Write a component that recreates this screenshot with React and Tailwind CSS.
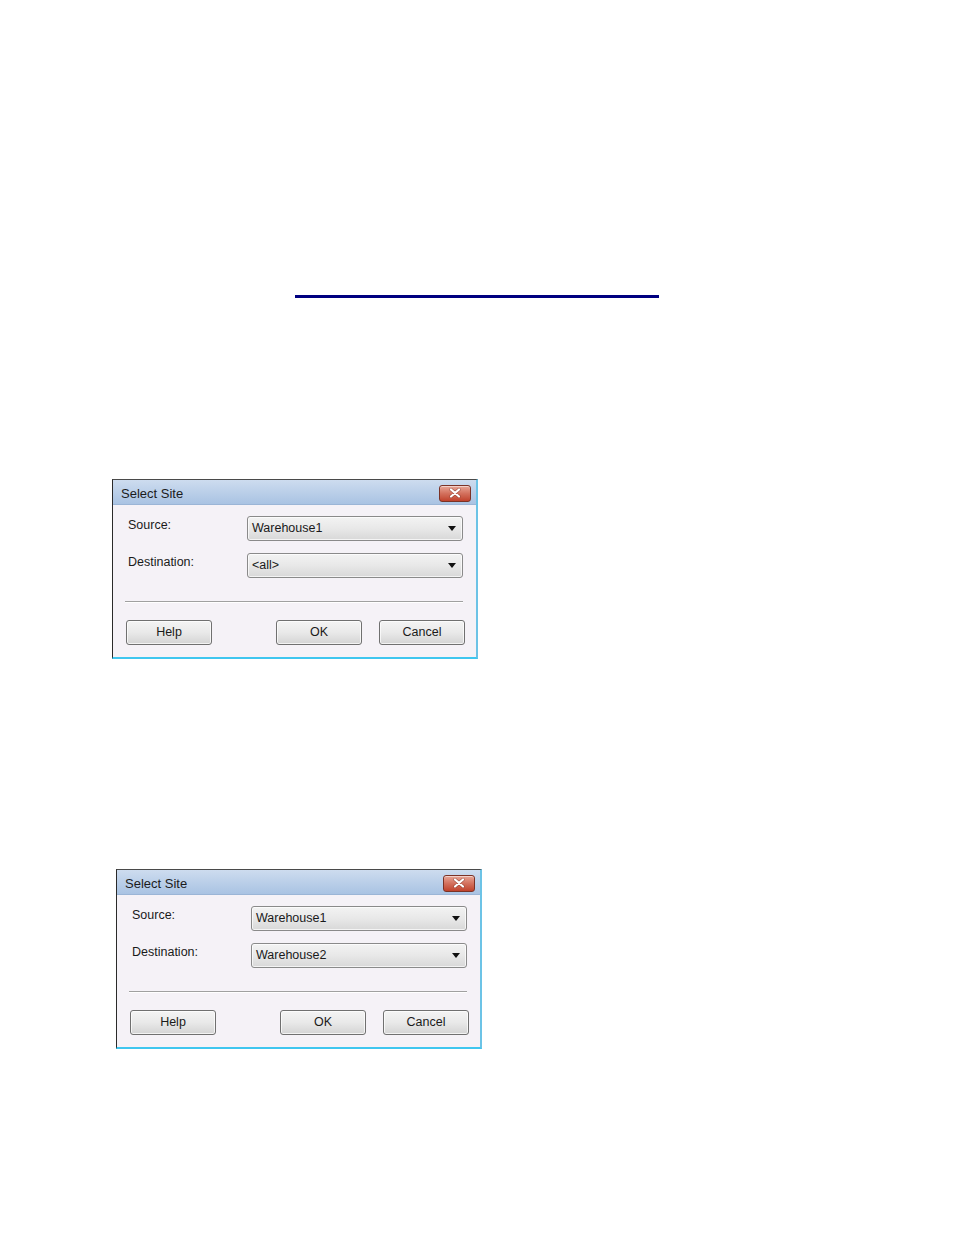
const font = { fontFamily: '"Liberation Sans", Arial, sans-serif' };

function CloseButton() {
  return (
    <div className="w-[32px] h-[17px] mt-[2px] rounded-[3px] border border-[#7b3226] bg-gradient-to-b from-[#e8a596] via-[#d3705d] to-[#c0412b] flex items-center justify-center shadow-[inset_0_1px_0_rgba(255,255,255,0.5)]">
      <svg width="14" height="10" viewBox="0 0 14 10">
        <path d="M3 1.5 L11 8.5 M11 1.5 L3 8.5" stroke="#6b2a20" strokeWidth="3.4" strokeLinecap="round" opacity="0.5" />
        <path d="M3 1.5 L11 8.5 M11 1.5 L3 8.5" stroke="#ffffff" strokeWidth="2.2" strokeLinecap="round" />
      </svg>
    </div>
  );
}

function Combo({ value }) {
  return (
    <div className="w-[216px] h-[25px] shrink-0 rounded-[3px] border border-[#8a8a8a] bg-gradient-to-b from-[#f3f3f3] via-[#e8e8e8] to-[#d8d8d8] flex items-center pl-[4px] pr-[6px] shadow-[inset_0_0_0_1px_rgba(255,255,255,0.7)]">
      <span className="flex-1 text-[12.5px] text-[#1a1a1a] leading-none">{value}</span>
      <svg width="8" height="5" viewBox="0 0 8 5">
        <path d="M0 0 H8 L4 5 Z" fill="#111" />
      </svg>
    </div>
  );
}

function Button({ children }) {
  return (
    <div className="w-[86px] h-[25px] shrink-0 rounded-[3px] border border-[#707070] bg-gradient-to-b from-[#f4f4f4] via-[#e9e9e9] to-[#d4d4d4] flex items-center justify-center text-[12.5px] text-[#1a1a1a] shadow-[inset_0_0_0_1px_rgba(255,255,255,0.7)]">
      {children}
    </div>
  );
}

function SelectSiteDialog({ destination }) {
  return (
    <div
      className="w-[366px] h-[180px] flex flex-col border-l border-t border-l-[#2a2a2a] border-t-[#4a4a4a] border-r-2 border-r-[#6cc3e6] border-b-2 border-b-[#3fc6ef] bg-[#f5f2f7]"
      style={font}
    >
      {/* title bar */}
      <div className="h-[25px] flex items-center justify-between pl-[8px] pr-[5px] bg-gradient-to-b from-[#cddcef] to-[#a9c3e3] border-b border-[#9bb5d6]">
        <span className="text-[13px] text-[#1b1b1b] pt-[3px]">Select Site</span>
        <CloseButton />
      </div>

      {/* body */}
      <div className="flex flex-col pl-[15px] pr-[4px] pt-[11px]">
        <div className="flex items-start">
          <span className="w-[119px] shrink-0 text-[12.5px] text-[#1a1a1a]">Source:</span>
          <Combo value="Warehouse1" />
        </div>
        <div className="flex items-start mt-[12px]">
          <span className="w-[119px] shrink-0 text-[12.5px] text-[#1a1a1a]">Destination:</span>
          <Combo value={destination} />
        </div>
        <div className="mt-[23px] ml-[-3px] h-[2px] border-t border-[#a0a0a0] border-b border-b-white w-[338px]" />
        <div className="flex mt-[17px] ml-[-2px]">
          <Button>Help</Button>
          <div className="ml-[64px]">
            <Button>OK</Button>
          </div>
          <div className="ml-[17px]">
            <Button>Cancel</Button>
          </div>
        </div>
      </div>
    </div>
  );
}

export default function App() {
  return (
    <div className="w-[954px] h-[1235px] bg-white overflow-hidden">
      <div className="pt-[295px] pl-[295px]">
        <div className="w-[364px] h-[3px] bg-[#000080]" />
      </div>
      <div className="mt-[181px] ml-[112px]">
        <SelectSiteDialog destination="<all>" />
      </div>
      <div className="mt-[210px] ml-[116px]">
        <SelectSiteDialog destination="Warehouse2" />
      </div>
    </div>
  );
}
